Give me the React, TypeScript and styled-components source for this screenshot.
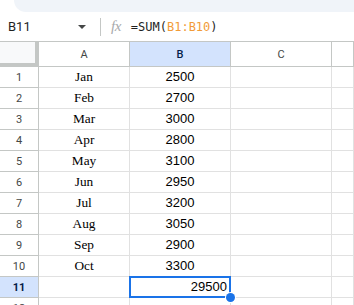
import React from 'react';
import styled, { createGlobalStyle, css } from 'styled-components';

const GlobalStyle = createGlobalStyle`
  html, body {
    margin: 0;
    padding: 0;
    background: #ffffff;
    overflow: hidden;
  }
  * {
    box-sizing: border-box;
  }
`;

const Page = styled.div`
  width: 354px;
  height: 305px;
  overflow: hidden;
  background: #ffffff;
  font-family: Roboto, 'Liberation Sans', Arial, sans-serif;
`;

const TopStrip = styled.div`
  height: 12px;
  margin-left: 14px;
  background: #f0f4f9;
  border-bottom-left-radius: 14px;
`;

const FormulaBar = styled.div`
  height: 29px;
  display: flex;
  align-items: center;
`;

const NameBox = styled.div`
  width: 100px;
  display: flex;
  align-items: center;
  justify-content: space-between;
  padding: 0 14px 0 8px;
  font-size: 13px;
  color: #1f1f1f;
`;

const Caret = styled.span`
  width: 0;
  height: 0;
  border-left: 4px solid transparent;
  border-right: 4px solid transparent;
  border-top: 4px solid #444746;
`;

const Divider = styled.span`
  width: 1px;
  height: 18px;
  background: #c4c7c5;
`;

const Fx = styled.span`
  margin: 0 10px 0 10px;
  font-family: 'Liberation Serif', 'DejaVu Serif', serif;
  font-style: italic;
  font-size: 15px;
  color: #a8aaac;
  letter-spacing: -0.5px;
`;

const Formula = styled.span`
  font-family: 'DejaVu Sans Mono', 'Liberation Mono', monospace;
  font-size: 12px;
  color: #1f1f1f;
`;

const Ref = styled.span`
  color: #f29b38;
`;

const Grid = styled.div`
  display: grid;
  grid-template-columns: 39px 91px 101px 101px 1fr;
  grid-auto-rows: 21px;
  grid-template-rows: 25px;
  border-top: 1px solid #c4c7c5;
`;

const Corner = styled.div`
  background: #f8f9fa;
  border-right: 4px solid #c4c7c5;
  border-bottom: 4px solid #c4c7c5;
`;

const ColHead = styled.div<{ $active?: boolean }>`
  display: flex;
  align-items: center;
  justify-content: center;
  font-size: 11px;
  color: #444746;
  border-right: 1px solid #c4c7c5;
  border-bottom: 1px solid #c4c7c5;
  background: #ffffff;
  ${(p) =>
    p.$active &&
    css`
      background: #d3e3fd;
      color: #041e49;
      font-weight: 500;
    `}
`;

const RowHead = styled.div<{ $active?: boolean }>`
  display: flex;
  align-items: center;
  justify-content: center;
  font-size: 11px;
  color: #444746;
  border-right: 1px solid #c4c7c5;
  border-bottom: 1px solid #c4c7c5;
  ${(p) =>
    p.$active &&
    css`
      background: #d3e3fd;
      color: #041e49;
      font-weight: 700;
    `}
`;

const Cell = styled.div<{
  $align?: 'left' | 'center' | 'right';
  $serif?: boolean;
  $selected?: boolean;
}>`
  position: relative;
  z-index: ${(p) => (p.$selected ? 2 : 0)};
  display: flex;
  align-items: flex-end;
  justify-content: ${(p) =>
    p.$align === 'right' ? 'flex-end' : p.$align === 'center' ? 'center' : 'flex-start'};
  padding: 0 3px 2px;
  border-right: 1px solid #e1e1e1;
  border-bottom: 1px solid #e1e1e1;
  font-family: ${(p) =>
    p.$serif
      ? "'Liberation Serif', 'Times New Roman', serif"
      : "'Liberation Sans', Arial, sans-serif"};
  font-size: ${(p) => (p.$serif ? '13.33px' : '13px')};
  line-height: 16px;
  color: #000000;
`;

const Selection = styled.div`
  position: absolute;
  top: -1px;
  left: -1px;
  right: -1px;
  bottom: -1px;
  border: 2px solid #1a73e8;
  pointer-events: none;
`;

const Handle = styled.span`
  position: absolute;
  right: -5px;
  bottom: -5px;
  width: 9px;
  height: 9px;
  border-radius: 50%;
  background: #1a73e8;
  box-shadow: 0 0 0 1px #ffffff;
`;

const months = ['Jan', 'Feb', 'Mar', 'Apr', 'May', 'Jun', 'Jul', 'Aug', 'Sep', 'Oct'];
const values = [2500, 2700, 3000, 2800, 3100, 2950, 3200, 3050, 2900, 3300];
const total = values.reduce((a, b) => a + b, 0);

const App = () => {
  return (
    <Page>
      <GlobalStyle />
      <TopStrip />
      <FormulaBar>
        <NameBox>
          B11
          <Caret />
        </NameBox>
        <Divider />
        <Fx>fx</Fx>
        <Formula>
          =SUM(<Ref>B1:B10</Ref>)
        </Formula>
      </FormulaBar>
      <Grid>
        <Corner />
        <ColHead>A</ColHead>
        <ColHead $active>B</ColHead>
        <ColHead>C</ColHead>
        <ColHead />

        {months.map((month, i) => (
          <React.Fragment key={month}>
            <RowHead>{i + 1}</RowHead>
            <Cell $align="center" $serif>
              {month}
            </Cell>
            <Cell $align="center">{values[i]}</Cell>
            <Cell />
            <Cell />
          </React.Fragment>
        ))}

        <RowHead $active>11</RowHead>
        <Cell />
        <Cell $align="right" $selected>
          {total}
          <Selection />
          <Handle />
        </Cell>
        <Cell />
        <Cell />

        <RowHead>12</RowHead>
        <Cell />
        <Cell />
        <Cell />
        <Cell />
      </Grid>
    </Page>
  );
};

export default App;
